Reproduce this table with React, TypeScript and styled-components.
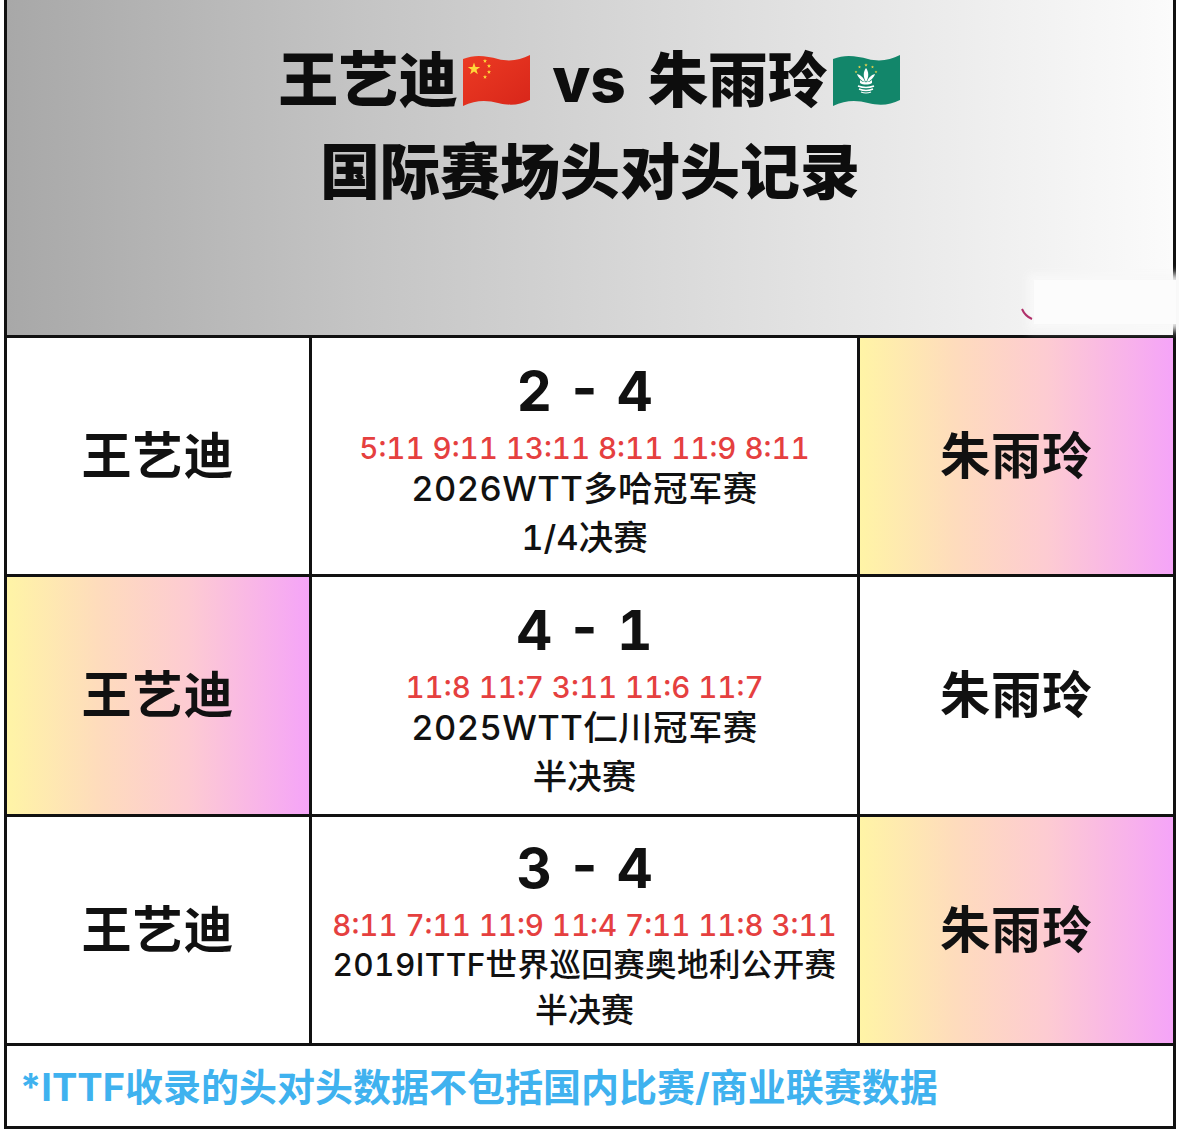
import styled, { createGlobalStyle } from 'styled-components';

interface Match {
  score: string;
  games: string;
  event: string;
  round: string;
  winner: 'left' | 'right';
  height: number;
  compact?: boolean;
}

const matches: Match[] = [
  {
    score: '2 - 4',
    games: '5:11 9:11 13:11 8:11 11:9 8:11',
    event: '2026WTT多哈冠军赛',
    round: '1/4决赛',
    winner: 'right',
    height: 236,
  },
  {
    score: '4 - 1',
    games: '11:8 11:7 3:11 11:6 11:7',
    event: '2025WTT仁川冠军赛',
    round: '半决赛',
    winner: 'left',
    height: 237,
  },
  {
    score: '3 - 4',
    games: '8:11 7:11 11:9 11:4 7:11 11:8 3:11',
    event: '2019ITTF世界巡回赛奥地利公开赛',
    round: '半决赛',
    winner: 'right',
    height: 226,
    compact: true,
  },
];

const GlobalStyle = createGlobalStyle`
  body {
    margin: 0;
    background: #ffffff;
    font-family: Inter, 'Noto Sans CJK SC', sans-serif;
  }
`;

const Page = styled.div`
  width: 1179px;
  height: 1145px;
  background: #ffffff;
`;

const Board = styled.div`
  margin-left: 4px;
  width: 1172px;
  box-sizing: border-box;
  border: 3px solid #111111;
  border-top: none;
`;

const Header = styled.header`
  position: relative;
  height: 338px;
  box-sizing: border-box;
  padding-top: 40px;
  border-bottom: 3px solid #111111;
  background: linear-gradient(90deg, #a8a8a8 0%, #c4c4c4 30%, #dcdcdc 60%, #fbfbfb 100%);
  display: flex;
  flex-direction: column;
  align-items: center;
`;

const TitleLine = styled.h1<{ $lh: number }>`
  margin: 0;
  display: flex;
  align-items: center;
  gap: 2px;
  font-family: Inter, 'Noto Sans CJK SC', sans-serif;
  font-size: 60px;
  font-weight: 900;
  line-height: ${({ $lh }) => $lh}px;
  color: #0d0d0d;
`;

const Versus = styled.span`
  font-family: Inter, sans-serif;
  font-weight: 800;
  font-size: 62px;
  margin: 0 20px 0 18px;
`;

const FlagBox = styled.svg`
  width: 72px;
  height: 54px;
  margin-top: 2px;
`;

const Smudge = styled.div`
  position: absolute;
  right: -3px;
  top: 280px;
  width: 142px;
  height: 44px;
  background: #fcfcfc;
  box-shadow: 0 0 8px 6px #f8f8f8;
`;

const SmudgeMark = styled.svg`
  position: absolute;
  left: 1013px;
  top: 306px;
  width: 16px;
  height: 16px;
`;

const Row = styled.div<{ $h: number }>`
  display: grid;
  grid-template-columns: 305px 548px 313px;
  height: ${({ $h }) => $h + 3}px;
  border-bottom: 3px solid #111111;
  box-sizing: border-box;
`;

const NameCell = styled.div<{ $winner: boolean; $last?: boolean }>`
  display: flex;
  align-items: center;
  justify-content: center;
  box-sizing: border-box;
  padding-bottom: 9px;
  border-right: ${({ $last }) => ($last ? 'none' : '3px solid #111111')};
  background: ${({ $winner }) =>
    $winner
      ? 'linear-gradient(90deg, #fff4a6 0%, #fedcbc 30%, #fdcbd2 60%, #f5a4f8 100%)'
      : '#ffffff'};
  font-family: 'Noto Sans CJK SC', sans-serif;
  font-size: 50px;
  font-weight: 700;
  color: #111111;
  letter-spacing: 1px;
`;

const MatchCell = styled.div<{ $compact?: boolean }>`
  display: flex;
  flex-direction: column;
  align-items: center;
  box-sizing: border-box;
  padding-top: ${({ $compact }) => ($compact ? 20 : 22)}px;
  border-right: 3px solid #111111;
  background: #ffffff;
  color: #111111;
  font-variant-numeric: tabular-nums;
  white-space: nowrap;
`;

const Score = styled.div`
  font-family: Inter, sans-serif;
  font-size: 55px;
  font-weight: 700;
  line-height: 62px;
`;

const Games = styled.div`
  margin-top: 6px;
  font-family: Inter, sans-serif;
  font-size: 29.5px;
  font-weight: 500;
  line-height: 40px;
  color: #e5403f;
`;

const EventName = styled.div<{ $compact?: boolean }>`
  font-family: Inter, 'Noto Sans CJK SC', sans-serif;
  font-size: ${({ $compact }) => ($compact ? 31.5 : 34.5)}px;
  font-weight: 500;
  letter-spacing: 0.4px;
  line-height: ${({ $compact }) => ($compact ? 40 : 42)}px;
`;

const Round = styled.div<{ $compact?: boolean }>`
  font-family: Inter, 'Noto Sans CJK SC', sans-serif;
  font-size: ${({ $compact }) => ($compact ? 33 : 34.5)}px;
  font-weight: 500;
  line-height: ${({ $compact }) => ($compact ? 50 : 56)}px;
`;

const Footer = styled.footer`
  height: 80px;
  box-sizing: border-box;
  display: flex;
  align-items: center;
  padding-left: 13px;
  padding-bottom: 4px;
  font-family: Inter, 'Noto Sans CJK SC', sans-serif;
  font-size: 38px;
  font-weight: 700;
  color: #3fb2ef;
`;

const WAVE =
  'M3 5 C 15 0, 27 2, 38 5 C 50 8, 60 6, 70 1 L 70 46 C 60 51, 50 52, 38 49 C 27 46, 15 46, 3 52 Z';

const star = (cx: number, cy: number, r: number) => {
  const pts: string[] = [];
  for (let i = 0; i < 10; i++) {
    const rad = i % 2 === 0 ? r : r * 0.4;
    const a = -Math.PI / 2 + (i * Math.PI) / 5;
    pts.push(`${(cx + rad * Math.cos(a)).toFixed(2)},${(cy + rad * Math.sin(a)).toFixed(2)}`);
  }
  return pts.join(' ');
};

const ChinaFlag = () => (
  <FlagBox viewBox="0 0 72 54">
    <defs>
      <linearGradient id="cnRed" x1="0" y1="0" x2="1" y2="1">
        <stop offset="0" stopColor="#ec3b23" />
        <stop offset="1" stopColor="#d8261a" />
      </linearGradient>
    </defs>
    <path d={WAVE} fill="url(#cnRed)" />
    <polygon points={star(14, 15, 6.5)} fill="#ffd83a" />
    <polygon points={star(25, 7, 2.2)} fill="#ffd83a" />
    <polygon points={star(29, 12, 2.2)} fill="#ffd83a" />
    <polygon points={star(29, 18, 2.2)} fill="#ffd83a" />
    <polygon points={star(25, 23, 2.2)} fill="#ffd83a" />
  </FlagBox>
);

const MacauFlag = () => (
  <FlagBox viewBox="0 0 72 54">
    <path d={WAVE} fill="#12866a" />
    <polygon points={star(36, 11, 1.8)} fill="#f6d64a" />
    <polygon points={star(29.5, 13, 1.6)} fill="#f6d64a" />
    <polygon points={star(42.5, 13, 1.6)} fill="#f6d64a" />
    <polygon points={star(26, 18, 1.5)} fill="#f6d64a" />
    <polygon points={star(46, 18, 1.5)} fill="#f6d64a" />
    <path d="M36 14 C 33 18, 33 23, 36 28 C 39 23, 39 18, 36 14 Z" fill="#ffffff" />
    <path d="M35 28 C 31 27, 28 23, 27 20 C 31 21, 34 24, 35 28 Z" fill="#ffffff" />
    <path d="M37 28 C 41 27, 44 23, 45 20 C 41 21, 38 24, 37 28 Z" fill="#ffffff" />
    <path d="M30 26 C 33 29, 39 29, 42 26 L 42 29 C 39 31, 33 31, 30 29 Z" fill="#ffffff" />
    <path d="M28 32 Q 36 35 44 32" stroke="#ffffff" strokeWidth="1.6" fill="none" />
    <path d="M29 35 Q 36 38 43 35" stroke="#ffffff" strokeWidth="1.4" fill="none" />
    <path d="M31 38 Q 36 40 41 38" stroke="#ffffff" strokeWidth="1.2" fill="none" />
  </FlagBox>
);

const MatchRow = ({ match }: { match: Match }) => (
  <Row $h={match.height}>
    <NameCell $winner={match.winner === 'left'}>王艺迪</NameCell>
    <MatchCell $compact={match.compact}>
      <Score>{match.score}</Score>
      <Games>{match.games}</Games>
      <EventName $compact={match.compact}>{match.event}</EventName>
      <Round $compact={match.compact}>{match.round}</Round>
    </MatchCell>
    <NameCell $winner={match.winner === 'right'} $last>
      朱雨玲
    </NameCell>
  </Row>
);

export default function App() {
  return (
    <Page>
      <GlobalStyle />
      <Board>
        <Header>
          <TitleLine $lh={80}>
            王艺迪
            <ChinaFlag />
            <Versus>vs</Versus>
            朱雨玲
            <MacauFlag />
          </TitleLine>
          <TitleLine $lh={104}>国际赛场头对头记录</TitleLine>
          <Smudge />
          <SmudgeMark viewBox="0 0 16 16">
            <path d="M2 3 Q 5 10 12 13" stroke="#b0306a" strokeWidth="2" fill="none" />
          </SmudgeMark>
        </Header>
        {matches.map((match, index) => (
          <MatchRow key={index} match={match} />
        ))}
        <Footer>*ITTF收录的头对头数据不包括国内比赛/商业联赛数据</Footer>
      </Board>
    </Page>
  );
}
